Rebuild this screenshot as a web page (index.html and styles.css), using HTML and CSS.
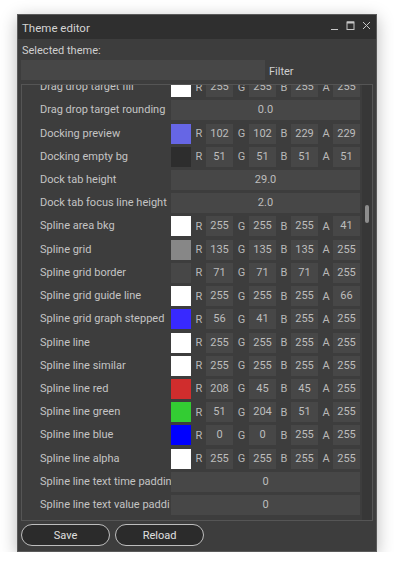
FILE: index.html
```html
<!DOCTYPE html>
<html>
<head>
<meta charset="utf-8">
<link rel="stylesheet" href="styles.css">
</head>
<body>
<div class="window">
  <div class="titlebar">
    <span class="title">Theme editor</span>
    <div class="controls">
      <svg width="9" height="9" viewBox="0 0 9 9"><line x1="1" y1="8.5" x2="8" y2="8.5" stroke="#c8c8c8" stroke-width="1"/></svg>
      <svg width="9" height="9" viewBox="0 0 9 9"><rect x="1" y="1" width="7" height="7.5" fill="none" stroke="#c8c8c8" stroke-width="1"/><line x1="1" y1="1.5" x2="8" y2="1.5" stroke="#c8c8c8" stroke-width="2"/></svg>
      <svg width="9" height="9" viewBox="0 0 9 9"><path d="M1 1 L8 8 M8 1 L1 8" stroke="#c8c8c8" stroke-width="1"/></svg>
    </div>
  </div>
  <div class="body">
    <div class="sel-label">Selected theme:</div>
    <div class="filter-row">
      <div class="input"></div>
      <span class="filter-label">Filter</span>
    </div>
    <div class="panel">
      <div class="list">
        <div class="row"><span class="name">Drag drop target fill</span><span class="sw" style="background:#ffffff"></span><span class="ch">R</span><span class="f">255</span><span class="ch">G</span><span class="f">255</span><span class="ch">B</span><span class="f">255</span><span class="ch">A</span><span class="f">255</span></div>
        <div class="row"><span class="name">Drag drop target rounding</span><span class="f wide">0.0</span></div>
        <div class="row"><span class="name">Docking preview</span><span class="sw" style="background:#6666e5"></span><span class="ch">R</span><span class="f">102</span><span class="ch">G</span><span class="f">102</span><span class="ch">B</span><span class="f">229</span><span class="ch">A</span><span class="f">229</span></div>
        <div class="row"><span class="name">Docking empty bg</span><span class="sw" style="background:#2d2d2d"></span><span class="ch">R</span><span class="f">51</span><span class="ch">G</span><span class="f">51</span><span class="ch">B</span><span class="f">51</span><span class="ch">A</span><span class="f">51</span></div>
        <div class="row"><span class="name">Dock tab height</span><span class="f wide">29.0</span></div>
        <div class="row"><span class="name">Dock tab focus line height</span><span class="f wide">2.0</span></div>
        <div class="row"><span class="name">Spline area bkg</span><span class="sw" style="background:#ffffff"></span><span class="ch">R</span><span class="f">255</span><span class="ch">G</span><span class="f">255</span><span class="ch">B</span><span class="f">255</span><span class="ch">A</span><span class="f">41</span></div>
        <div class="row"><span class="name">Spline grid</span><span class="sw" style="background:#878787"></span><span class="ch">R</span><span class="f">135</span><span class="ch">G</span><span class="f">135</span><span class="ch">B</span><span class="f">135</span><span class="ch">A</span><span class="f">255</span></div>
        <div class="row"><span class="name">Spline grid border</span><span class="sw" style="background:#474747"></span><span class="ch">R</span><span class="f">71</span><span class="ch">G</span><span class="f">71</span><span class="ch">B</span><span class="f">71</span><span class="ch">A</span><span class="f">255</span></div>
        <div class="row"><span class="name">Spline grid guide line</span><span class="sw" style="background:#ffffff"></span><span class="ch">R</span><span class="f">255</span><span class="ch">G</span><span class="f">255</span><span class="ch">B</span><span class="f">255</span><span class="ch">A</span><span class="f">66</span></div>
        <div class="row"><span class="name">Spline grid graph stepped</span><span class="sw" style="background:#3829ff"></span><span class="ch">R</span><span class="f">56</span><span class="ch">G</span><span class="f">41</span><span class="ch">B</span><span class="f">255</span><span class="ch">A</span><span class="f">255</span></div>
        <div class="row"><span class="name">Spline line</span><span class="sw" style="background:#ffffff"></span><span class="ch">R</span><span class="f">255</span><span class="ch">G</span><span class="f">255</span><span class="ch">B</span><span class="f">255</span><span class="ch">A</span><span class="f">255</span></div>
        <div class="row"><span class="name">Spline line similar</span><span class="sw" style="background:#ffffff"></span><span class="ch">R</span><span class="f">255</span><span class="ch">G</span><span class="f">255</span><span class="ch">B</span><span class="f">255</span><span class="ch">A</span><span class="f">255</span></div>
        <div class="row"><span class="name">Spline line red</span><span class="sw" style="background:#d02d2d"></span><span class="ch">R</span><span class="f">208</span><span class="ch">G</span><span class="f">45</span><span class="ch">B</span><span class="f">45</span><span class="ch">A</span><span class="f">255</span></div>
        <div class="row"><span class="name">Spline line green</span><span class="sw" style="background:#33cc33"></span><span class="ch">R</span><span class="f">51</span><span class="ch">G</span><span class="f">204</span><span class="ch">B</span><span class="f">51</span><span class="ch">A</span><span class="f">255</span></div>
        <div class="row"><span class="name">Spline line blue</span><span class="sw" style="background:#0000ff"></span><span class="ch">R</span><span class="f">0</span><span class="ch">G</span><span class="f">0</span><span class="ch">B</span><span class="f">255</span><span class="ch">A</span><span class="f">255</span></div>
        <div class="row"><span class="name">Spline line alpha</span><span class="sw" style="background:#ffffff"></span><span class="ch">R</span><span class="f">255</span><span class="ch">G</span><span class="f">255</span><span class="ch">B</span><span class="f">255</span><span class="ch">A</span><span class="f">255</span></div>
        <div class="row"><span class="name">Spline line text time paddin</span><span class="f wide">0</span></div>
        <div class="row"><span class="name">Spline line text value paddi</span><span class="f wide">0</span></div>
      </div>
      <div class="scrolltrack"><div class="thumb"></div></div>
    </div>
    <div class="buttons">
      <button class="btn">Save</button>
      <button class="btn">Reload</button>
    </div>
  </div>
</div>
</body>
</html>
```
FILE: styles.css
```css
html, body {
  margin: 0;
  padding: 0;
  background: #ffffff;
}
body {
  font-family: Roboto, "Noto Sans", sans-serif;
  font-size: 11px;
  color: #c6c6c6;
}
.window {
  margin: 14px 0 0 17px;
  width: 358px;
  height: 536px;
  border: 1px solid #5a5a5a;
  background: #3d3d3d;
  box-shadow: 0 4px 16px rgba(0, 0, 0, 0.28);
  display: flex;
  flex-direction: column;
}
.titlebar {
  height: 24px;
  background: #2f2f2f;
  display: flex;
  align-items: center;
  justify-content: space-between;
  padding: 0 5px 0 4px;
  flex: none;
}
.title {
  color: #d4d4d4;
  font-size: 11.5px;
  padding-top: 2px;
}
.controls {
  display: flex;
  gap: 7px;
  align-items: center;
  margin-bottom: 3px;
}
.controls svg {
  display: block;
}
.body {
  flex: 1;
  display: flex;
  flex-direction: column;
  padding: 0 3px 0 3px;
}
.sel-label {
  height: 21px;
  line-height: 23px;
  padding-left: 1px;
  color: #cfcfcf;
}
.filter-row {
  display: flex;
  align-items: center;
  height: 20px;
  margin-bottom: 4px;
}
.input {
  width: 244px;
  height: 20px;
  background: #474747;
}
.filter-label {
  margin-left: 4px;
  color: #cfcfcf;
  padding-top: 2px;
}
.panel {
  position: relative;
  height: 435px;
  border: 1px solid #555555;
  overflow: hidden;
}
.list {
  margin-top: -9.5px;
}
.row {
  height: 23.22px;
  display: grid;
  grid-template-columns: 149px 20px 15px 27px 16px 27px 15px 27px 15px 27px;
  align-items: center;
}
.name {
  padding-left: 18px;
  white-space: nowrap;
  overflow: hidden;
  color: #c4c4c4;
  padding-bottom: 1px;
}
.sw {
  height: 20px;
}
.ch {
  text-align: center;
  color: #b8b8b8;
  padding-left: 1px;
}
.f {
  height: 20px;
  line-height: 20px;
  background: #474747;
  text-align: center;
  color: #bdbdbd;
}
.f.wide {
  grid-column: 2 / -1;
}
.scrolltrack {
  position: absolute;
  top: 0;
  right: 0;
  width: 10px;
  height: 100%;
  background: #373737;
}
.thumb {
  position: absolute;
  left: 3px;
  top: 120px;
  width: 4px;
  height: 18px;
  border-radius: 2px;
  background: #8d8d8d;
}
.buttons {
  display: flex;
  gap: 5px;
  margin-top: 3px;
}
.btn {
  width: 89px;
  height: 22px;
  border: 1px solid #bdbdbd;
  border-radius: 11px;
  background: #2b2b2b;
  color: #e0e0e0;
  font-family: Roboto, "Noto Sans", sans-serif;
  font-size: 11px;
  padding: 0;
}
```
